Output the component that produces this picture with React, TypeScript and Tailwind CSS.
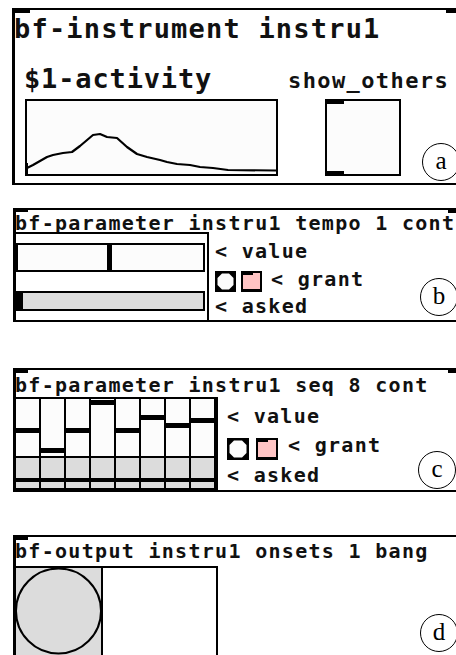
import React from "react";

function Circle({ ch, cls }: { ch: string; cls: string }) {
  return (
    <div
      className={
        "absolute w-[38px] h-[38px] rounded-full border-[1.5px] border-black flex items-center justify-center font-['Liberation_Serif',serif] font-normal text-[25px] leading-none text-black pb-[3px] " +
        cls
      }
    >
      {ch}
    </div>
  );
}

function Octo({ size }: { size: number }) {
  const a = 2.5;
  const b = size - 2.5;
  const k = 4.5;
  const pts = `${a + k},${a} ${b - k},${a} ${b},${a + k} ${b},${b - k} ${b - k},${b} ${a + k},${b} ${a},${b - k} ${a},${a + k}`;
  return (
    <svg width={size} height={size} className="block shrink-0">
      <rect width={size} height={size} fill="#000" />
      <polygon points={pts} fill="#fcfcfc" />
    </svg>
  );
}

function Pink({ cls }: { cls: string }) {
  return (
    <div className={"relative shrink-0 border-2 border-b-[3px] border-black bg-[#ffc4c4] " + cls}>
      <div className="absolute -top-[2px] -left-[2px] w-[12px] h-[4px] bg-black" />
    </div>
  );
}

function PanelA() {
  const pts =
    "2,69 8,66 22,58 28,56 38,54 47,53 55,47 68,36 75,35 82,38 92,39 102,48 112,55 122,58 135,61 142,63 152,65 165,66 175,68 188,69 203,71 251,71.5";
  return (
    <div className="relative ml-[12px] w-[470px] h-[177px] shrink-0 border-t-2 border-b-2 border-l-[3px] border-black">
      <div className="absolute -top-[2px] -left-[3px] w-[18px] h-[5px] bg-black" />
      <div className="absolute -top-[2px] left-[431px] w-[20px] h-[5px] bg-black" />
      <div className="ml-[-1px] mt-[3px] h-[32px] leading-[32px] text-[27px] tracking-[1.2px] whitespace-nowrap">
        bf-instrument instru1
      </div>
      <div className="mt-[18px] flex items-baseline h-[32px] leading-[32px] whitespace-nowrap">
        <span className="ml-[9px] w-[264px] text-[27px] tracking-[0.85px]">$1-activity</span>
        <span className="text-[22px] tracking-[1.4px]">show_others</span>
      </div>
      <div className="mt-[4px] flex">
        <svg width="253" height="77" className="block ml-[10px] shrink-0">
          <rect x="1" y="1" width="251" height="75" fill="#fcfcfc" stroke="#000" strokeWidth="2" />
          <polyline points={pts} fill="none" stroke="#000" strokeWidth="2.2" strokeLinejoin="round" />
          <rect x="0" y="64" width="3" height="13" fill="#000" />
        </svg>
        <svg width="76" height="77" className="block ml-[47px] shrink-0">
          <rect x="1" y="1" width="74" height="75" fill="#fcfcfc" stroke="#000" strokeWidth="2" />
          <rect x="0" y="0" width="19" height="5" fill="#000" />
          <rect x="0" y="72" width="19" height="5" fill="#000" />
        </svg>
      </div>
      <Circle ch="a" cls="left-[407px] top-[133px]" />
    </div>
  );
}

function PanelB() {
  return (
    <div className="relative mt-[23px] ml-[13px] w-[470px] h-[114px] shrink-0 border-t-2 border-b-2 border-l-[3px] border-black">
      <div className="absolute -top-[2px] -left-[3px] w-[15px] h-[4px] bg-black" />
      <div className="absolute -top-[2px] left-[432px] w-[20px] h-[5px] bg-black" />
      <div className="h-[22px] pt-[1px] ml-[-1px] leading-[24px] text-[20px] tracking-[1.3px] whitespace-nowrap">
        bf-parameter instru1 tempo 1 cont
      </div>
      <div className="flex">
        <div className="w-[193px] h-[88px] shrink-0 border-t-2 border-r-2 border-black flex flex-col">
          <div className="relative mt-[9px] w-[189px] h-[29px] border-2 border-black bg-[#fcfcfc]">
            <div className="absolute top-0 bottom-0 left-[89px] w-[5px] bg-black" />
          </div>
          <div className="relative mt-[19px] w-[189px] h-[20px] border-2 border-black bg-[#dcdcdc]">
            <div className="absolute top-0 bottom-0 left-0 w-[5px] bg-black" />
          </div>
        </div>
        <div className="flex flex-col pl-[6px] pt-[7px] text-[20px] leading-[24px] tracking-[1.3px] whitespace-nowrap">
          <div>&lt; value</div>
          <div className="mt-[8px] h-[21px] flex items-start">
            <Octo size={21} />
            <Pink cls="ml-[5px] w-[21px] h-[21px]" />
            <span className="ml-[9px] mt-[-4px]">&lt; grant</span>
          </div>
          <div className="mt-[2px]">&lt; asked</div>
        </div>
      </div>
      <Circle ch="b" cls="left-[404px] top-[68px]" />
    </div>
  );
}

const seqMarks = [29, 49, 29, 1, 29, 16, 24, 19];

function PanelC() {
  return (
    <div className="relative mt-[46px] ml-[13px] w-[470px] h-[124px] shrink-0 border-t-2 border-b-2 border-l-[3px] border-black">
      <div className="absolute -top-[2px] -left-[3px] w-[15px] h-[5px] bg-black" />
      <div className="absolute -top-[2px] left-[432px] w-[20px] h-[5px] bg-black" />
      <div className="h-[27px] pt-[3px] ml-[-1px] leading-[24px] text-[20px] tracking-[1.3px] whitespace-nowrap">
        bf-parameter instru1 seq 8 cont
      </div>
      <div className="flex">
        <div className="w-[202px] h-[93px] shrink-0 border-t-2 border-r-2 border-black flex flex-col">
          <div className="flex">
            {seqMarks.map((m, i) => (
              <div key={i} className="relative w-[25px] h-[59px] border-r-2 border-b-2 border-black bg-[#fcfcfc]">
                <div className="absolute left-0 right-0 h-[5px] bg-black" style={{ top: m }} />
              </div>
            ))}
          </div>
          <div className="flex">
            {seqMarks.map((_, i) => (
              <div key={i} className="relative w-[25px] h-[32px] border-r-2 border-b-2 border-black bg-[#dcdcdc]">
                <div className="absolute left-0 right-0 top-[20px] h-[4px] bg-black" />
              </div>
            ))}
          </div>
        </div>
        <div className="flex flex-col pl-[9px] pt-[7px] text-[20px] leading-[24px] tracking-[1.3px] whitespace-nowrap">
          <div>&lt; value</div>
          <div className="mt-[10px] h-[22px] flex items-start">
            <Octo size={22} />
            <Pink cls="ml-[7px] w-[22px] h-[22px]" />
            <span className="ml-[10px] mt-[-5px]">&lt; grant</span>
          </div>
          <div className="mt-[3px]">&lt; asked</div>
        </div>
      </div>
      <Circle ch="c" cls="left-[402px] top-[81px]" />
    </div>
  );
}

function PanelD() {
  return (
    <div className="relative mt-[43px] ml-[13px] w-[470px] h-[140px] shrink-0 border-t-2 border-l-[3px] border-black">
      <div className="absolute -top-[2px] -left-[3px] w-[15px] h-[5px] bg-black" />
      <div className="h-[29px] pt-[2px] ml-[-1px] leading-[24px] text-[20px] tracking-[1.3px] whitespace-nowrap">
        bf-output instru1 onsets 1 bang
      </div>
      <div className="flex">
        <div className="w-[87px] h-[100px] shrink-0 border-t-2 border-r-2 border-black bg-[#dcdcdc]">
          <svg width="85" height="98" className="block">
            <circle cx="42.5" cy="43" r="42.5" fill="#dcdcdc" stroke="#000" strokeWidth="2" />
          </svg>
        </div>
        <div className="w-[115px] h-[100px] shrink-0 border-t-2 border-r-2 border-black bg-white" />
      </div>
      <Circle ch="d" cls="left-[404px] top-[77px]" />
    </div>
  );
}

export default function App() {
  return (
    <div className="w-[456px] h-[655px] overflow-hidden bg-white text-[#111] font-['DejaVu_Sans_Mono',monospace] font-bold flex flex-col pt-[8px]">
      <PanelA />
      <PanelB />
      <PanelC />
      <PanelD />
    </div>
  );
}
